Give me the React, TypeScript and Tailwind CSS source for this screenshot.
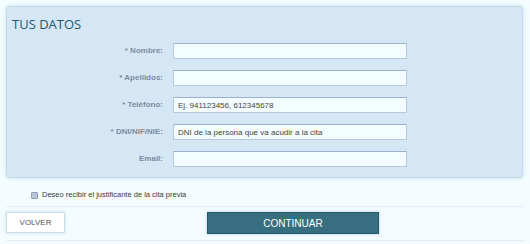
const fields = [
  { label: '* Nombre:', placeholder: '' },
  { label: '* Apellidos:', placeholder: '' },
  { label: '* Teléfono:', placeholder: 'Ej. 941123456, 612345678' },
  { label: '* DNI/NIF/NIE:', placeholder: 'DNI de la persona que va acudir a la cita' },
  { label: 'Email:', placeholder: '' },
];

export default function App() {
  return (
    <div className="w-[530px] h-[244px] overflow-hidden bg-[#f4fcff] px-[6px] pt-[6px] font-['Liberation_Sans',Arial,sans-serif]">
      {/* Datos */}
      <div className="w-[517px] h-[172px] rounded-[4px] border border-[#c4d9ea] bg-[#d5e7f5] pt-[11px] shadow-[0_0_4px_rgba(160,200,225,0.55)]">
        <h2 className="pl-[5px] text-[13px] leading-[13px] font-medium text-[#23596f] font-['Open_Sans',sans-serif]">TUS DATOS</h2>
        <div className="mt-[12px] flex flex-col gap-[11px]">
          {fields.map((f) => (
            <div key={f.label} className="flex items-center">
              <label className="w-[156px] text-right text-[8px] font-bold text-[#7d8ba2]">{f.label}</label>
              <input
                className="ml-[10px] w-[234px] h-[16px] rounded-[1px] border border-[#b5c9dc] border-t-[#9cb2ca] bg-[#f3fcff] px-[4px] text-[8px] text-[#333] placeholder:text-[#444] outline-none"
                placeholder={f.placeholder}
              />
            </div>
          ))}
        </div>
      </div>

      {/* Justificante */}
      <div className="h-[28px] pt-[6px] pl-[25px] flex items-center gap-[4px]">
        <span className="w-[7px] h-[7px] rounded-[1px] border border-[#8f9fb5] bg-[#b9c6d6]" />
        <span className="text-[7.5px] text-[#3a3a3a]">Deseo recibir el justificante de la cita previa</span>
      </div>

      {/* Botones */}
      <div className="w-[517px] border-t border-b border-[#e2eef5] pt-[5px] pb-[6px] flex items-start">
        <button className="w-[59px] h-[21px] bg-white border border-[#cbdcea] shadow-[0_0_3px_rgba(170,200,220,0.5)] text-[8px] text-[#555]">
          VOLVER
        </button>
        <button className="ml-[142px] w-[172px] h-[22px] bg-[#386f80] border border-[#25586a] shadow-[0_0_3px_rgba(120,160,180,0.5)] text-[10px] text-white">
          CONTINUAR
        </button>
      </div>
    </div>
  );
}
